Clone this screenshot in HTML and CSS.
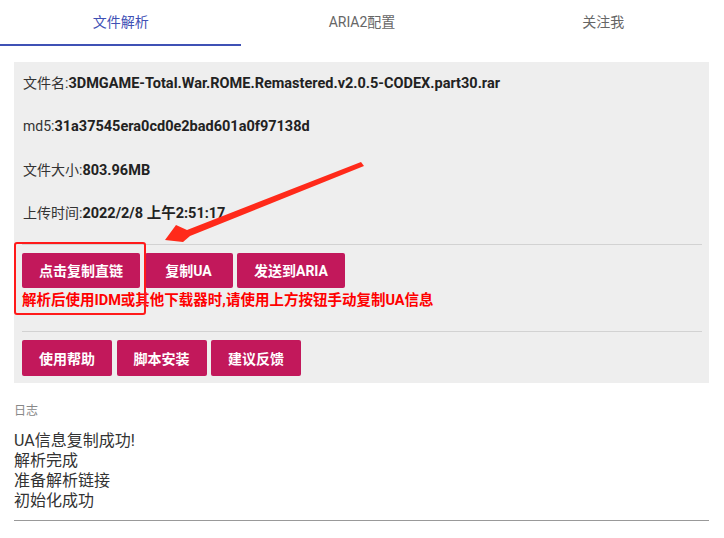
FILE: index.html
```html
<!DOCTYPE html>
<html lang="zh-CN">
<head>
<meta charset="utf-8">
<title>文件解析</title>
<link rel="stylesheet" href="styles.css">
</head>
<body>
<nav class="tabs">
  <div class="tab active">文件解析</div>
  <div class="tab">ARIA2配置</div>
  <div class="tab">关注我</div>
</nav>
<main class="content">
  <section class="panel">
    <div class="info"><span class="label">文件名:</span><b>3DMGAME-Total.War.ROME.Remastered.v2.0.5-CODEX.part30.rar</b></div>
    <div class="info"><span class="label">md5:</span><b>31a37545era0cd0e2bad601a0f97138d</b></div>
    <div class="info"><span class="label">文件大小:</span><b>803.96MB</b></div>
    <div class="info"><span class="label">上传时间:</span><b>2022/2/8 上午2:51:17</b></div>
    <hr class="divider">
    <div class="btn-row">
      <button class="btn">点击复制直链</button>
      <button class="btn">复制UA</button>
      <button class="btn">发送到ARIA</button>
    </div>
    <p class="warn">解析后使用IDM或其他下载器时,请使用上方按钮手动复制UA信息</p>
    <hr class="divider second">
    <div class="btn-row">
      <button class="btn">使用帮助</button>
      <button class="btn">脚本安装</button>
      <button class="btn">建议反馈</button>
    </div>
  </section>
  <section class="log">
    <div class="log-title">日志</div>
    <div class="log-body">
      <div>UA信息复制成功!</div>
      <div>解析完成</div>
      <div>准备解析链接</div>
      <div>初始化成功</div>
    </div>
  </section>
</main>
<div class="mark-box"></div>
<svg class="mark-arrow" width="724" height="538" viewBox="0 0 724 538">
  <polygon points="165,240 176,225 187,230 361,162 364,166 190,236 183,242" fill="#ff2a1a"/>
</svg>
</body>
</html>
```
FILE: styles.css
```css
* { box-sizing: border-box; }
html, body { margin: 0; padding: 0; background: #fff; }
body {
  font-family: Roboto, "Noto Sans CJK SC", sans-serif;
  font-size: 14px;
  color: #333;
  width: 724px;
  height: 538px;
  overflow: hidden;
  position: relative;
}
.tabs {
  display: flex;
  height: 46px;
}
.tab {
  flex: 1;
  text-align: center;
  line-height: 44px;
  font-size: 14px;
  color: #666;
  border-bottom: 2px solid transparent;
}
.tab.active {
  color: #3f51b5;
  border-bottom-color: #3f51b5;
}
.content {
  padding: 16px 15px 0 14px;
}
.panel {
  background: #eeeeee;
  padding: 0 7px 7px 8px;
}
.info {
  height: 43.4px;
  line-height: 43.4px;
  padding-left: 1px;
  color: #333;
  white-space: nowrap;
}
.info b { color: #222; font-weight: 700; font-size: 14.5px; }
.divider {
  border: 0;
  border-top: 1px solid #d2d2d2;
  margin: 8px 0 8px 0;
  height: 0;
}
.divider.second { margin-top: 20px; }
.btn-row {
  display: flex;
  gap: 4.5px;
}
.btn {
  font-family: Roboto, "Noto Sans CJK SC", sans-serif;
  font-size: 14px;
  font-weight: 700;
  color: #fff;
  background: #c2185b;
  border: 0;
  border-radius: 2px;
  height: 35.5px;
  min-width: 88px;
  padding: 0 17px;
}
.warn {
  margin: 3px 0 0 0;
  line-height: 20px;
  font-size: 14.5px;
  font-weight: 700;
  color: #ff0000;
  white-space: nowrap;
}
.log { padding-top: 20px; }
.log-title {
  font-size: 12px;
  color: #888;
  line-height: 16px;
}
.log-body {
  margin-top: 12px;
  font-size: 16px;
  line-height: 20px;
  color: #333;
  padding-bottom: 9px;
  border-bottom: 1px solid #999;
}
.mark-box {
  position: absolute;
  left: 14px;
  top: 242px;
  width: 132px;
  height: 73px;
  border: 2.5px solid #ff1a1a;
  border-radius: 3px;
  pointer-events: none;
}
.mark-arrow {
  position: absolute;
  left: 0;
  top: 0;
  pointer-events: none;
}
```
